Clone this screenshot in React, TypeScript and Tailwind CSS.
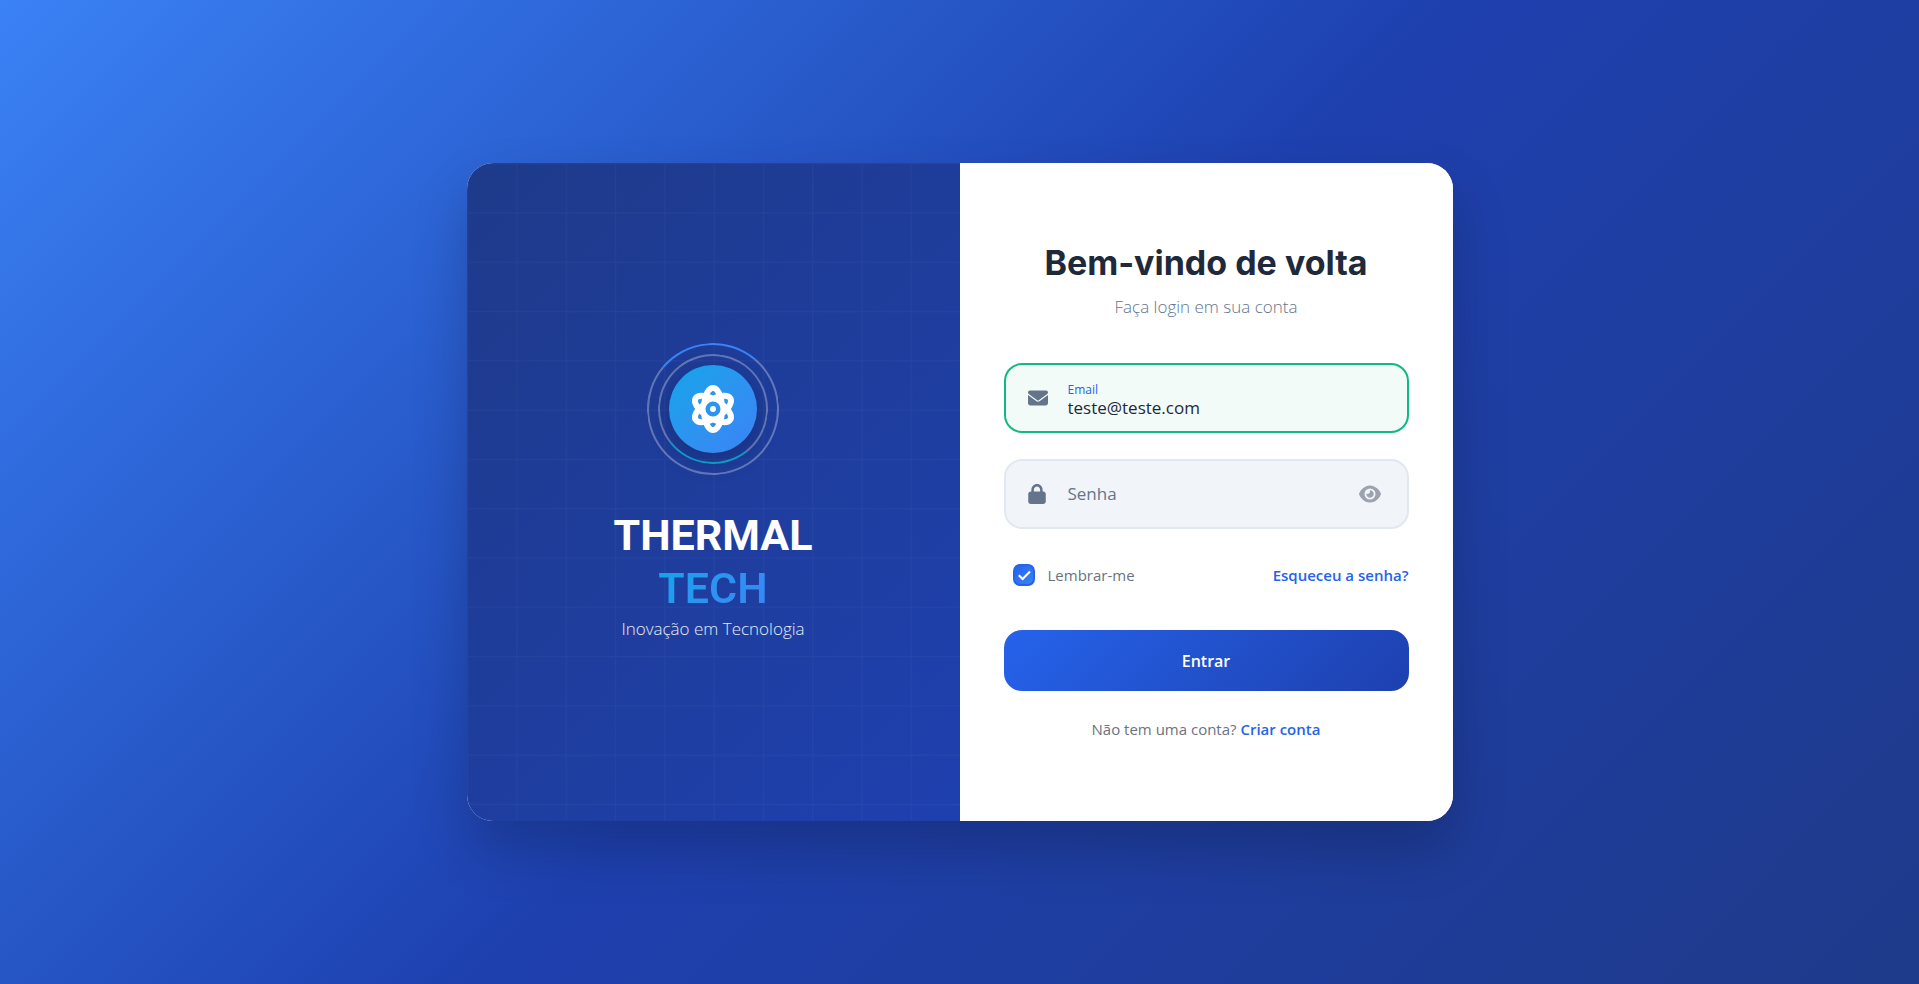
import { useState } from "react";
import { FaAtom, FaEnvelope, FaEye, FaEyeSlash, FaLock } from "react-icons/fa6";

function GridPattern() {
  return (
    <svg className="pointer-events-none absolute top-0 left-0 w-full" viewBox="0 0 100 200" aria-hidden="true">
      <defs>
        <pattern id="grid" width="10" height="10" patternUnits="userSpaceOnUse">
          <path d="M 10 0 L 0 0 0 10" fill="none" stroke="white" strokeOpacity="0.03" strokeWidth="0.5" />
        </pattern>
      </defs>
      <rect width="100" height="200" fill="url(#grid)" />
    </svg>
  );
}

function Logo() {
  return (
    <div className="relative flex size-33 items-center justify-center">
      <div className="absolute inset-0 -rotate-5 rounded-full border-2 border-white/30 border-t-[#3b82f6]" />
      <div className="absolute inset-[11px] rotate-7 rounded-full border-2 border-white/30 border-b-[#06b6d4]/80" />
      <div className="flex size-22 items-center justify-center rounded-full bg-linear-135 from-[#0ea5e9] to-[#3b82f6] shadow-[0_8px_24px_rgba(0,0,0,0.2)]">
        <FaAtom className="size-12 text-white" />
      </div>
    </div>
  );
}

function BrandPanel() {
  return (
    <section className="relative flex flex-1 flex-col items-center justify-center overflow-hidden bg-linear-135 from-[#1e3a8a] to-[#1e40af] p-11">
      <GridPattern />
      <div className="relative flex flex-col items-center">
        <Logo />
        <h1 className="mt-8.5 flex flex-col items-center font-[Roboto,sans-serif] text-[43px] leading-[53px] font-bold text-white">
          <span>THERMAL</span>
          <span className="bg-linear-135 from-[#0ea5e9] to-[#3b82f6] bg-clip-text font-semibold text-transparent">TECH</span>
        </h1>
        <p className="text-[17px] leading-[27px] font-[350] text-white/90">Inovação em Tecnologia</p>
      </div>
    </section>
  );
}

function LoginForm() {
  const [email, setEmail] = useState("teste@teste.com");
  const [password, setPassword] = useState("");
  const [visible, setVisible] = useState(false);

  return (
    <section className="flex flex-1 flex-col bg-white px-11 pt-[78px] pb-20">
      <header className="text-center">
        <h2 className="font-['Inter',sans-serif] text-[34px] leading-11 font-bold text-[#1e293b]">Bem-vindo de volta</h2>
        <p className="mt-2 text-[17px] leading-7 font-[350] text-[#64748b]">Faça login em sua conta</p>
      </header>

      <form className="mt-[42px] flex flex-col" onSubmit={(e) => e.preventDefault()}>
        <div className="flex h-[70px] items-center rounded-[18px] border-2 border-[#10b981] bg-[#f2fbf8] px-[22px]">
          <FaEnvelope className="h-5 w-5 shrink-0 text-[#64748b]" />
          <div className="ml-5 flex min-w-0 flex-1 flex-col pt-1">
            <label htmlFor="email" className="text-xs leading-4 font-medium text-[#2563eb]">Email</label>
            <input
              id="email"
              type="email"
              value={email}
              onChange={(e) => setEmail(e.target.value)}
              className="w-full bg-transparent text-[17px] leading-5 font-medium text-[#1e293b] outline-none"
            />
          </div>
        </div>

        <div className="mt-[26px] flex h-[70px] items-center rounded-[18px] border-2 border-[#e2e8f0] bg-[#f1f5f9] px-[22px]">
          <FaLock className="mr-0.5 h-5 w-[18px] shrink-0 text-[#64748b]" />
          <input
            id="password"
            type={visible ? "text" : "password"}
            aria-label="Senha"
            placeholder="Senha"
            value={password}
            onChange={(e) => setPassword(e.target.value)}
            className="ml-5 min-w-0 flex-1 bg-transparent text-[17px] leading-6 font-medium text-[#1e293b] outline-none placeholder:text-[#64748b]"
          />
          <button type="button" aria-label="Mostrar senha" onClick={() => setVisible(!visible)} className="mr-1 text-[#9ca3af]">
            {visible ? <FaEyeSlash className="size-[22px]" /> : <FaEye className="size-[22px]" />}
          </button>
        </div>

        <div className="mt-[35px] flex items-center justify-between text-[15px] leading-[22px] font-medium">
          <label className="flex cursor-pointer items-center gap-[13px] pl-[9px] text-[#6b7280]">
            <span className="relative flex size-[22px] items-center justify-center">
              <input
                type="checkbox"
                defaultChecked
                className="peer size-[22px] appearance-none rounded-[7px] border-2 border-[#cbd5e1] checked:border-[#2563eb] checked:bg-linear-135 checked:from-[#2563eb] checked:to-[#3b82f6]"
              />
              <svg className="pointer-events-none absolute hidden size-4 text-white peer-checked:block" viewBox="0 0 16 16" fill="none" aria-hidden="true">
                <path d="M2.8 8.2 6.6 12 14 4.4" stroke="currentColor" strokeWidth="2.1" />
              </svg>
            </span>
            Lembrar-me
          </label>
          <a href="#recuperar" className="font-semibold text-[#2563eb]">Esqueceu a senha?</a>
        </div>

        <button
          type="submit"
          className="mt-11 h-[61px] rounded-[18px] bg-linear-135 from-[#2563eb] to-[#1e40af] text-[16px] font-semibold text-white"
        >
          Entrar
        </button>
      </form>

      <p className="mt-[26px] text-center text-[15px] leading-6 text-[#6b7280]">
        Não tem uma conta?{" "}
        <a href="#criar" className="font-semibold text-[#2563eb]">Criar conta</a>
      </p>
    </section>
  );
}

export default function App() {
  return (
    <main className="flex min-h-screen items-center justify-center bg-linear-135 from-[#3b82f6] via-[#1e40af] to-[#1e3a8a] p-4 font-['Open_Sans','Noto_Sans',sans-serif]">
      <div className="flex w-full max-w-[986px] flex-col overflow-hidden rounded-[26px] bg-white shadow-[0_28px_55px_rgba(0,0,0,0.2)] md:flex-row">
        <BrandPanel />
        <LoginForm />
      </div>
    </main>
  );
}
